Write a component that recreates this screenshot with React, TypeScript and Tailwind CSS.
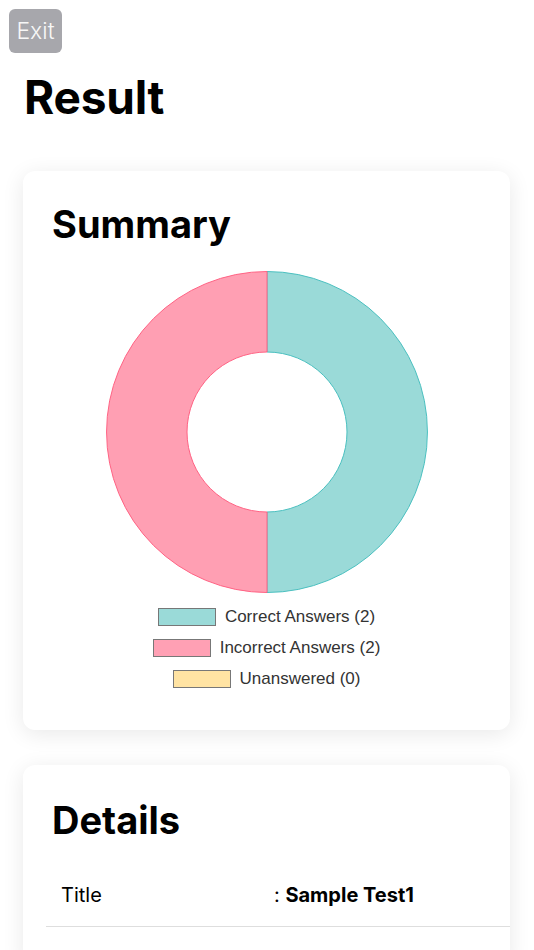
const legend = [
  { label: "Correct Answers (2)", box: "bg-[#9adad8]" },
  { label: "Incorrect Answers (2)", box: "bg-[#ffa0b4]" },
  { label: "Unanswered (0)", box: "bg-[#ffe3a3]" },
];

function Donut() {
  return (
    <svg width="322" height="322" viewBox="0 0 322 322" className="block">
      {/* correct half */}
      <path
        d="M161 0.5 A160.5 160.5 0 0 1 161 321.5 L161 241 A80 80 0 0 0 161 81 Z"
        fill="#9adad8"
        stroke="#4bc0c0"
        strokeWidth="1"
      />
      {/* incorrect half */}
      <path
        d="M161 321.5 A160.5 160.5 0 0 1 161 0.5 L161 81 A80 80 0 0 0 161 241 Z"
        fill="#ff9fb3"
        stroke="#ff6384"
        strokeWidth="1"
      />
    </svg>
  );
}

export default function App() {
  return (
    <div className="min-h-screen bg-white pt-[9px] font-['Inter',sans-serif] text-black">
      <button className="ml-[9px] h-[44px] w-[53px] rounded-md bg-[#a7a7ac] text-[23px] font-light text-[#f7f7f7]">
        Exit
      </button>

      <h1 className="ml-[24px] mt-[16px] text-[46px] font-bold leading-[56px] tracking-[-0.2px]">
        Result
      </h1>

      {/* Summary card */}
      <section className="ml-[23px] mr-[24px] mt-[46px] rounded-[12px] bg-white pt-[30px] pb-[36px] shadow-[0_4px_22px_rgba(0,0,0,0.09)]">
        <h2 className="px-[29px] text-[38px] font-bold leading-[46px]">Summary</h2>
        <div className="mt-[24px] flex justify-center">
          <Donut />
        </div>
        <ul className="mt-[8px] flex flex-col items-center font-['Liberation_Sans',Arial,sans-serif] text-[17px] text-[#333]">
          {legend.map((item) => (
            <li key={item.label} className="flex h-[31px] items-center gap-[9px]">
              <span className={`h-[18px] w-[58px] border-[1.5px] border-[#777] ${item.box}`} />
              <span>{item.label}</span>
            </li>
          ))}
        </ul>
      </section>

      {/* Details card */}
      <section className="ml-[23px] mr-[24px] mt-[35px] overflow-hidden rounded-[12px] bg-white pt-[32px] pb-[40px] shadow-[0_4px_22px_rgba(0,0,0,0.09)]">
        <h2 className="px-[29px] text-[38px] font-bold leading-[46px]">Details</h2>
        <div className="ml-[23px] mt-[16px]">
          <div className="grid grid-cols-[228px_1fr] border-b border-[#dedede] pt-[24px] pb-[19px] text-[20px] leading-[24px]">
            <div className="pl-[15px]">Title</div>
            <div>
              : <span className="font-bold">Sample Test1</span>
            </div>
          </div>
        </div>
      </section>
    </div>
  );
}
